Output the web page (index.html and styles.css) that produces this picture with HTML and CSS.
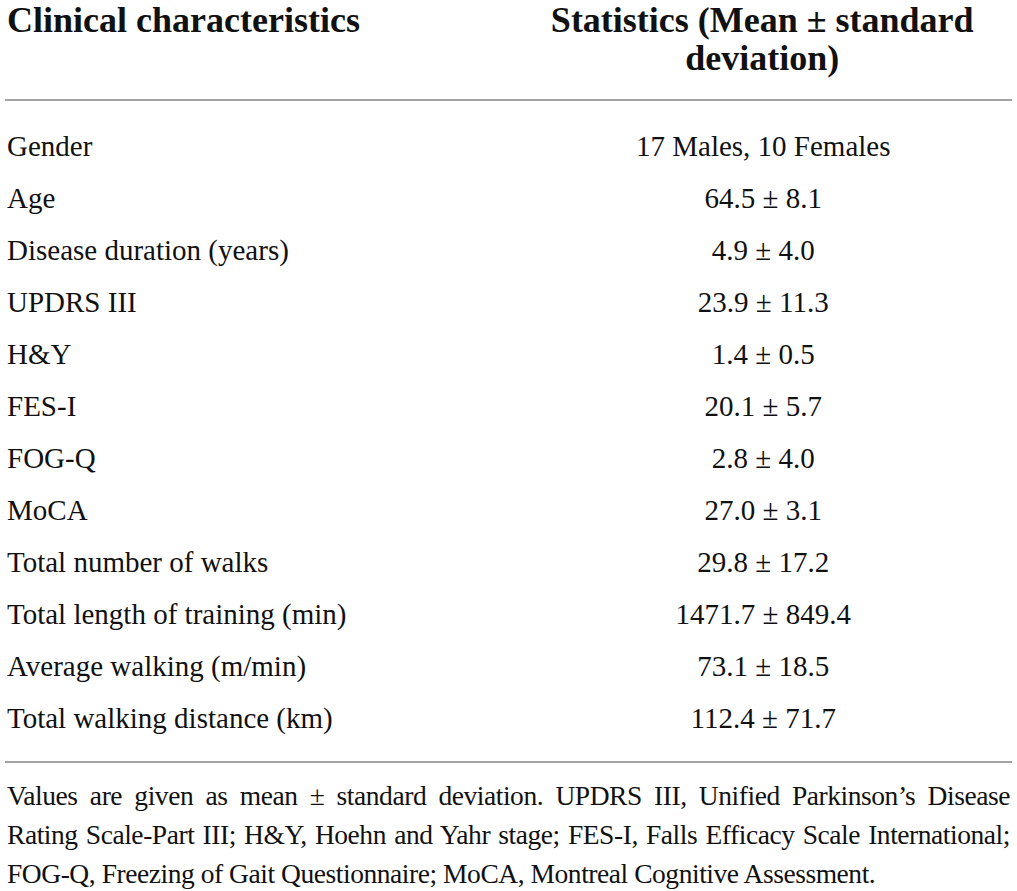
FILE: index.html
```html
<!DOCTYPE html>
<html lang="en">
  <head>
    <meta charset="utf-8">
    <meta name="viewport" content="width=device-width, initial-scale=1">
    <title>Clinical characteristics</title>
    <link rel="stylesheet" href="styles.css">
  </head>
  <body>
    <table class="stats">
        <thead>
            <tr>
                <th class="label">Clinical characteristics</th>
                <th class="value">Statistics (Mean &plusmn; standard deviation)</th>
            </tr>
        </thead>
        <tbody>
            <tr><td class="label">Gender</td><td class="value">17 Males, 10 Females</td></tr>
            <tr><td class="label">Age</td><td class="value">64.5 &plusmn; 8.1</td></tr>
            <tr><td class="label">Disease duration (years)</td><td class="value">4.9 &plusmn; 4.0</td></tr>
            <tr><td class="label">UPDRS III</td><td class="value">23.9 &plusmn; 11.3</td></tr>
            <tr><td class="label">H&amp;Y</td><td class="value">1.4 &plusmn; 0.5</td></tr>
            <tr><td class="label">FES-I</td><td class="value">20.1 &plusmn; 5.7</td></tr>
            <tr><td class="label">FOG-Q</td><td class="value">2.8 &plusmn; 4.0</td></tr>
            <tr><td class="label">MoCA</td><td class="value">27.0 &plusmn; 3.1</td></tr>
            <tr><td class="label">Total number of walks</td><td class="value">29.8 &plusmn; 17.2</td></tr>
            <tr><td class="label">Total length of training (min)</td><td class="value">1471.7 &plusmn; 849.4</td></tr>
            <tr><td class="label">Average walking (m/min)</td><td class="value">73.1 &plusmn; 18.5</td></tr>
            <tr><td class="label">Total walking distance (km)</td><td class="value">112.4 &plusmn; 71.7</td></tr>
        </tbody>
    </table>
    <p class="note">Values are given as mean &plusmn; standard deviation. UPDRS III, Unified Parkinson&rsquo;s Disease Rating Scale-Part III; H&amp;Y, Hoehn and Yahr stage; FES-I, Falls Efficacy Scale International; FOG-Q, Freezing of Gait Questionnaire; MoCA, Montreal Cognitive Assessment.</p>
  </body>
</html>
```

FILE: styles.css
```css
body {
    margin: 0;
    background: #fff;
    color: #111;
    font-family: "Liberation Serif", "Times New Roman", serif;
}
.stats {
    width: 1007px;
    margin: 0 5px;
    border-collapse: collapse;
    table-layout: fixed;
}
.stats th,
.stats td {
    padding: 0;
    vertical-align: top;
}
.stats .label {
    width: 50%;
    text-align: left;
    padding-left: 2px;
}
.stats .value {
    text-align: center;
    padding-left: 4px;
}
.stats th {
    font-size: 36px;
    line-height: 38px;
    font-weight: bold;
    padding-top: 1px;
    padding-bottom: 22px;
    border-bottom: 2px solid #a3a3a3;
}
.stats th.value {
    padding-left: 36px;
    padding-right: 34px;
}
.stats td {
    font-size: 29px;
    line-height: 52px;
}
.stats tbody tr:first-child td {
    padding-top: 19px;
}
.stats tbody tr:last-child td {
    padding-bottom: 17px;
    border-bottom: 2px solid #a3a3a3;
}
.note {
    margin: 13px 0 0;
    padding: 0 7px;
    font-size: 27.5px;
    letter-spacing: -0.45px;
    line-height: 39px;
    text-align: justify;
}
```
